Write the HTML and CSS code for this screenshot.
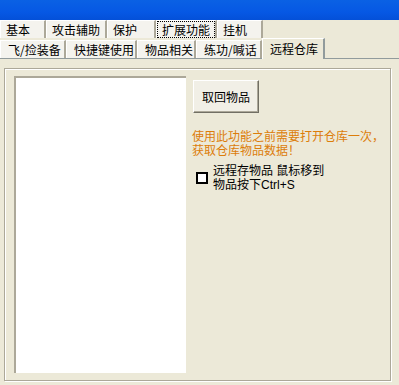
FILE: index.html
```html
<!DOCTYPE html>
<html lang="zh-CN">

<head>
    <meta charset="UTF-8">
    <title>远程仓库</title>
    <link rel="stylesheet" href="styles.css">
</head>

<body>
    <div class="titlebar"></div>
    <div class="tab-row row-back">
        <div class="tab" style="width: 46px">基本</div>
        <div class="tab" style="width: 61px">攻击辅助</div>
        <div class="tab" style="width: 49px">保护</div>
        <div class="tab focus-tab" style="width: 61px"><span class="focus">扩展功能</span></div>
        <div class="tab" style="width: 46px">挂机</div>
    </div>
    <div class="tab-row row-front">
        <div class="tab" style="width: 66px">飞/捡装备</div>
        <div class="tab" style="width: 71px">快捷键使用</div>
        <div class="tab" style="width: 59px">物品相关</div>
        <div class="tab" style="width: 66px">练功/喊话</div>
        <div class="tab active" style="width: 63px">远程仓库</div>
    </div>
    <div class="panel">
        <div class="groupbox">
            <div class="listbox"></div>
            <div class="side">
                <button class="button">取回物品</button>
                <div class="note">使用此功能之前需要打开仓库一次，<br>获取仓库物品数据！</div>
                <label class="check">
                    <span class="box"></span>
                    <span class="check-text">远程存物品 鼠标移到<br>物品按下Ctrl+S</span>
                </label>
            </div>
        </div>
    </div>
</body>

</html>
```

FILE: styles.css
```css
body {
    margin: 0;
    background-color: #ece9d8;
    font-family: "Noto Sans CJK SC", "DejaVu Sans", sans-serif;
    font-size: 12px;
    color: #000;
    overflow: hidden;
}

.titlebar {
    height: 20px;
    background: linear-gradient(to bottom, #0a61e4, #0658e4 60%, #0450d8);
}

.tab-row {
    display: flex;
    align-items: flex-end;
}

.row-back {
    height: 18px;
}

.row-front {
    height: 20px;
}

.tab {
    box-sizing: border-box;
    height: 18px;
    line-height: 17px;
    padding-left: 5px;
    background-color: #f4f3ee;
    border-left: 1px solid #ffffff;
    border-top: 1px solid #ffffff;
    border-right: 2px solid #aca899;
    white-space: nowrap;
}

.row-front .tab {
    padding-left: 7px;
}

.focus-tab {
    padding-left: 0;
}

.focus {
    display: inline-block;
    padding: 0 4px;
    line-height: 15px;
    border: 1px dotted #000;
}

.tab.active {
    height: 21px;
    margin-bottom: -1px;
    background-color: #ece9d8;
    border-right: 2px solid #919b9c;
    line-height: 19px;
}

.panel {
    border-top: 1px solid #919b9c;
    padding: 9px 0 0 4px;
    height: 326px;
    box-sizing: border-box;
}

.groupbox {
    display: flex;
    width: 387px;
    height: 313px;
    box-sizing: border-box;
    border: 1px solid #aca899;
    box-shadow: inset 1px 1px 0 #ffffff, 1px 1px 0 #ffffff;
    padding: 7px 0 0 9px;
}

.listbox {
    width: 172px;
    height: 297px;
    box-sizing: border-box;
    background-color: #ffffff;
    border-top: 2px solid #aca899;
    border-left: 2px solid #aca899;
}

.side {
    display: flex;
    flex-direction: column;
    padding-left: 6px;
}

.button {
    width: 66px;
    height: 33px;
    margin-top: 4px;
    margin-left: 1px;
    padding: 0;
    font-family: inherit;
    font-size: 12px;
    color: #000;
    background-color: #f1efe6;
    border: 1px solid;
    border-color: #ffffff #716f64 #716f64 #ffffff;
    box-shadow: inset -1px -1px 0 #aca899;
}

.note,
.check-text {
    font-family: "Liberation Sans", "Noto Sans CJK SC", sans-serif;
    line-height: 14px;
}

.note {
    margin-top: 17px;
    color: #dc7d0a;
}

.check {
    display: flex;
    align-items: flex-start;
    margin-top: 6px;
    margin-left: 4px;
}

.box {
    width: 12px;
    height: 12px;
    box-sizing: border-box;
    margin-top: 8px;
    border: 2px solid #000;
    background-color: #ffffff;
}

.check-text {
    margin-left: 5px;
}
```
